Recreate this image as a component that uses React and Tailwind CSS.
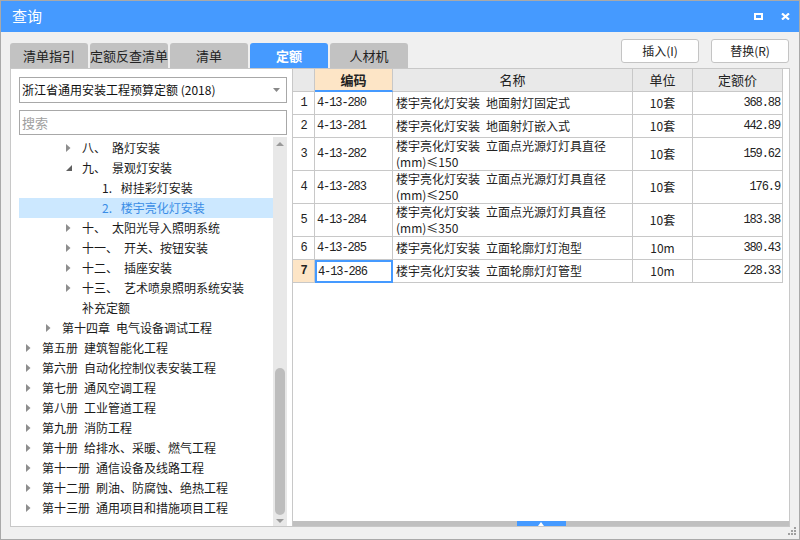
import React from "react";

const S = "\u2002";

const tree = [
  { lvl: 3, tri: "c", text: "八、" + S + "路灯安装" },
  { lvl: 3, tri: "e", text: "九、" + S + "景观灯安装" },
  { lvl: 4, text: "1." + S + " 树挂彩灯安装" },
  { lvl: 4, text: "2." + S + " 楼宇亮化灯安装", sel: true },
  { lvl: 3, tri: "c", text: "十、" + S + "太阳光导入照明系统" },
  { lvl: 3, tri: "c", text: "十一、" + S + "开关、按钮安装" },
  { lvl: 3, tri: "c", text: "十二、" + S + "插座安装" },
  { lvl: 3, tri: "c", text: "十三、" + S + "艺术喷泉照明系统安装" },
  { lvl: 3, text: "补充定额" },
  { lvl: 2, tri: "c", text: "第十四章" + S + "电气设备调试工程" },
  { lvl: 1, tri: "c", text: "第五册" + S + "建筑智能化工程" },
  { lvl: 1, tri: "c", text: "第六册" + S + "自动化控制仪表安装工程" },
  { lvl: 1, tri: "c", text: "第七册" + S + "通风空调工程" },
  { lvl: 1, tri: "c", text: "第八册" + S + "工业管道工程" },
  { lvl: 1, tri: "c", text: "第九册" + S + "消防工程" },
  { lvl: 1, tri: "c", text: "第十册" + S + "给排水、采暖、燃气工程" },
  { lvl: 1, tri: "c", text: "第十一册" + S + "通信设备及线路工程" },
  { lvl: 1, tri: "c", text: "第十二册" + S + "刷油、防腐蚀、绝热工程" },
  { lvl: 1, tri: "c", text: "第十三册" + S + "通用项目和措施项目工程" },
];

const lvlPad = { 1: "pl-[3px]", 2: "pl-[23px]", 3: "pl-[43px]", 4: "pl-[63px]" };

const rows = [
  { n: "1", code: "4-13-280", name: ["楼宇亮化灯安装" + S + "地面射灯固定式"], unit: "10套", price: "368.88" },
  { n: "2", code: "4-13-281", name: ["楼宇亮化灯安装" + S + "地面射灯嵌入式"], unit: "10套", price: "442.89" },
  { n: "3", code: "4-13-282", name: ["楼宇亮化灯安装" + S + "立面点光源灯灯具直径", "(mm)≤150"], unit: "10套", price: "159.62" },
  { n: "4", code: "4-13-283", name: ["楼宇亮化灯安装" + S + "立面点光源灯灯具直径", "(mm)≤250"], unit: "10套", price: "176.9" },
  { n: "5", code: "4-13-284", name: ["楼宇亮化灯安装" + S + "立面点光源灯灯具直径", "(mm)≤350"], unit: "10套", price: "183.38" },
  { n: "6", code: "4-13-285", name: ["楼宇亮化灯安装" + S + "立面轮廓灯灯泡型"], unit: "10m", price: "380.43" },
  { n: "7", code: "4-13-286", name: ["楼宇亮化灯安装" + S + "立面轮廓灯灯管型"], unit: "10m", price: "228.33", active: true },
];

const tabs = ["清单指引", "定额反查清单", "清单", "定额", "人材机"];

function TriCollapsed() {
  return (
    <svg width="5" height="8" viewBox="0 0 5 8">
      <path d="M0 0 L4.5 4 L0 8Z" fill="#8e8e8e" />
    </svg>
  );
}
function TriExpanded() {
  return (
    <svg width="6" height="6" viewBox="0 0 6 6">
      <path d="M6 0 L6 6 L0 6Z" fill="#606060" />
    </svg>
  );
}

const mono = "font-['Liberation_Mono',monospace] text-[12px] tracking-[-1.1px]";

export default function App() {
  return (
    <div className="w-[800px] h-[540px] border border-[#a9a9a9] bg-[#f0f0f0] flex flex-col font-['Noto_Sans_CJK_SC',sans-serif] text-[12px] text-[#222] overflow-hidden">
      {/* Title bar */}
      <div className="h-[31px] bg-[#459aff] flex items-center justify-between pl-[11px] pr-[9px] shrink-0">
        <span className="text-white text-[15px]">查询</span>
        <div className="flex items-center gap-[18px]">
          <div className="w-[9px] h-[7px] border-2 border-white" />
          <svg width="9" height="7" viewBox="0 0 9 7">
            <path d="M1 0.5 L8 6.5 M8 0.5 L1 6.5" stroke="white" strokeWidth="2.2" />
          </svg>
        </div>
      </div>

      {/* Tabs + buttons */}
      <div className="h-[36px] flex justify-between pl-[9px] pr-[10px] shrink-0">
        <div className="flex gap-[2px] self-end">
          {tabs.map((t) => (
            <div
              key={t}
              className={
                t === "定额"
                  ? "w-[78px] h-[25px] rounded-t-[3px] bg-[#459aff] text-white font-bold text-[13px] flex items-center justify-center"
                  : "w-[78px] h-[25px] rounded-t-[3px] bg-[#c2c2c2] text-[#222] text-[13px] flex items-center justify-center"
              }
            >
              {t}
            </div>
          ))}
        </div>
        <div className="flex gap-[12px] mt-[7px] self-start">
          <div className="w-[78px] h-[24px] bg-white border border-[#c4c4c4] rounded-[3px] flex items-center justify-center text-[12px]">插入(I)</div>
          <div className="w-[78px] h-[24px] bg-white border border-[#c4c4c4] rounded-[3px] flex items-center justify-center text-[12px]">替换(R)</div>
        </div>
      </div>

      {/* Panels */}
      <div className="h-[459px] flex pl-[9px] pr-[9px] shrink-0">
        {/* Left panel */}
        <div className="w-[282px] border border-r-0 border-[#c8c8c8] bg-white flex flex-col pl-[8px] pr-[5px] pt-[8px]">
          <div className="h-[26px] border border-[#a8a8a8] flex items-center justify-between pl-[2px] pr-[6px]">
            <span className="text-[12px] text-[#111]">浙江省通用安装工程预算定额 (2018)</span>
            <svg width="7" height="4" viewBox="0 0 7 4">
              <path d="M0 0 L7 0 L3.5 4Z" fill="#888" />
            </svg>
          </div>
          <div className="h-[25px] mt-[7px] border border-[#a8a8a8] flex items-center pl-[2px] text-[13px] text-[#a0a0a0]">
            搜索
          </div>
          <div className="flex-1 flex mt-[2px] min-h-0">
            <div className="flex-1 flex flex-col pt-[1px] overflow-hidden">
              {tree.map((r, i) => (
                <div
                  key={i}
                  className={
                    (r.sel ? "bg-[#cce8ff] text-[#3a8de6] " : "text-[#1a1a1a] ") +
                    "h-[20px] shrink-0 flex items-center whitespace-pre " +
                    lvlPad[r.lvl]
                  }
                >
                  <div className="w-[20px] h-[20px] flex items-center pl-[4px]">
                    {r.tri === "c" && <TriCollapsed />}
                    {r.tri === "e" && <TriExpanded />}
                  </div>
                  <span>{r.text}</span>
                </div>
              ))}
            </div>
            {/* scrollbar */}
            <div className="w-[14px] bg-[#e8e8e8] flex flex-col">
              <div className="h-[13px] flex items-center justify-center">
                <svg width="8" height="4" viewBox="0 0 8 4">
                  <path d="M0 4 L8 4 L4 0Z" fill="#9a9a9a" />
                </svg>
              </div>
              <div className="flex-1" />
              <div className="h-[147px] mx-[2px] rounded-full bg-[#bdbdbd]" />
              <div className="h-[11px] flex items-center justify-center">
                <svg width="8" height="4" viewBox="0 0 8 4">
                  <path d="M0 0 L8 0 L4 4Z" fill="#9a9a9a" />
                </svg>
              </div>
            </div>
          </div>
        </div>

        {/* Right panel */}
        <div className="flex-1 border border-[#c8c8c8] bg-white flex flex-col">
          <div className="flex-1">
            <div className="grid grid-cols-[22px_78px_240px_60px_90px]">
              {/* header */}
              <div className="h-[23px] bg-[#e9e9e9] border-r border-b border-[#c8c8c8]" />
              <div className="h-[23px] bg-[#fde5c6] border-r border-[#c8c8c8] border-b-2 border-b-[#459aff] flex items-center justify-center font-bold text-[13px]">编码</div>
              <div className="h-[23px] bg-[#e9e9e9] border-r border-b border-[#c8c8c8] flex items-center justify-center text-[13px]">名称</div>
              <div className="h-[23px] bg-[#e9e9e9] border-r border-b border-[#c8c8c8] flex items-center justify-center text-[13px]">单位</div>
              <div className="h-[23px] bg-[#e9e9e9] border-r border-b border-[#c8c8c8] flex items-center justify-center text-[13px]">定额价</div>
              {rows.map((r) => {
                const h = r.name.length > 1 ? "h-[33px]" : "h-[23px]";
                return (
                  <React.Fragment key={r.n}>
                    <div
                      className={
                        h +
                        " border-r border-b border-[#c8c8c8] flex items-center justify-center " +
                        mono +
                        (r.active ? " bg-[#fde5c6] font-bold" : " bg-white")
                      }
                    >
                      {r.n}
                    </div>
                    <div
                      className={
                        h +
                        " flex items-center " +
                        mono +
                        (r.active
                          ? " border-2 border-[#459aff] pl-[1px]"
                          : " border-r border-b border-[#c8c8c8] pl-[2px]")
                      }
                    >
                      {r.code}
                    </div>
                    <div className={h + " border-r border-b border-[#c8c8c8] flex flex-col justify-center pl-[3px] leading-[16px]"}>
                      {r.name.map((l, i) => (
                        <span key={i} className="whitespace-pre">{l}</span>
                      ))}
                    </div>
                    <div className={h + " border-r border-b border-[#c8c8c8] flex items-center justify-center"}>
                      {r.unit}
                    </div>
                    <div className={h + " border-r border-b border-[#c8c8c8] flex items-center justify-end pr-[2px] " + mono}>
                      {r.price}
                    </div>
                  </React.Fragment>
                );
              })}
            </div>
          </div>
          <div className="h-[5px] bg-[#c0c0c0] flex justify-center shrink-0">
            <div className="w-[49px] h-[5px] bg-[#459aff] flex items-end justify-center">
              <svg width="6" height="4" viewBox="0 0 6 4">
                <path d="M0 4 L6 4 L3 0Z" fill="white" />
              </svg>
            </div>
          </div>
        </div>
      </div>

      {/* Bottom strip with grip */}
      <div className="flex-1 flex justify-end items-start pr-[2px]">
        <svg width="9" height="9" viewBox="0 0 9 9">
          <rect x="6" y="0" width="2" height="2" fill="#a0a0a0" />
          <rect x="3" y="3" width="2" height="2" fill="#a0a0a0" />
          <rect x="6" y="3" width="2" height="2" fill="#a0a0a0" />
          <rect x="0" y="6" width="2" height="2" fill="#a0a0a0" />
          <rect x="3" y="6" width="2" height="2" fill="#a0a0a0" />
          <rect x="6" y="6" width="2" height="2" fill="#a0a0a0" />
        </svg>
      </div>
    </div>
  );
}
